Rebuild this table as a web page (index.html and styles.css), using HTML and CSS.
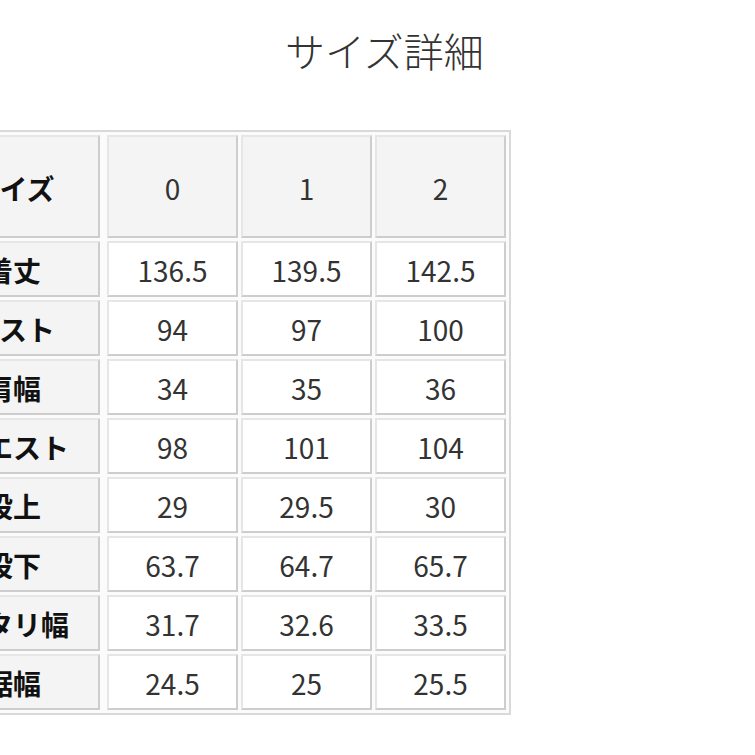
FILE: index.html
```html
<!DOCTYPE html>
<html lang="ja">
<head>
<meta charset="utf-8">
<title>サイズ詳細</title>
<link rel="stylesheet" href="styles.css">
</head>
<body>
<h1 class="title">サイズ詳細</h1>
<div class="size-table">
  <div class="cell head label">サイズ</div>
  <div class="cell head">0</div>
  <div class="cell head">1</div>
  <div class="cell head">2</div>

  <div class="cell label">着丈</div>
  <div class="cell">136.5</div>
  <div class="cell">139.5</div>
  <div class="cell">142.5</div>

  <div class="cell label">バスト</div>
  <div class="cell">94</div>
  <div class="cell">97</div>
  <div class="cell">100</div>

  <div class="cell label">肩幅</div>
  <div class="cell">34</div>
  <div class="cell">35</div>
  <div class="cell">36</div>

  <div class="cell label">ウエスト</div>
  <div class="cell">98</div>
  <div class="cell">101</div>
  <div class="cell">104</div>

  <div class="cell label">股上</div>
  <div class="cell">29</div>
  <div class="cell">29.5</div>
  <div class="cell">30</div>

  <div class="cell label">股下</div>
  <div class="cell">63.7</div>
  <div class="cell">64.7</div>
  <div class="cell">65.7</div>

  <div class="cell label">ワタリ幅</div>
  <div class="cell">31.7</div>
  <div class="cell">32.6</div>
  <div class="cell">33.5</div>

  <div class="cell label">裾幅</div>
  <div class="cell">24.5</div>
  <div class="cell">25</div>
  <div class="cell">25.5</div>
</div>
</body>
</html>
```

FILE: styles.css
```css
html, body {
  margin: 0;
  padding: 0;
  background: #ffffff;
}

body {
  font-family: "Noto Sans CJK JP", "Noto Sans", sans-serif;
  color: #333333;
  overflow: hidden;
}

.title {
  margin: 21px 0 0 0;
  padding-left: 285px;
  font-size: 40px;
  font-weight: 300;
  line-height: 58px;
  color: #333333;
}

.size-table {
  display: inline-grid;
  grid-template-columns: 178px 131px 131px 131px;
  grid-template-rows: 103px repeat(8, 56px);
  gap: 3px;
  margin: 51px 0 0 -79px;
  padding: 3px;
  border: 2px solid #d9d9d9;
  background: #fbfbfb;
}

.cell {
  display: flex;
  align-items: center;
  justify-content: center;
  box-sizing: border-box;
  padding-top: 2px;
  border: 2px solid;
  border-color: #e6e6e6 #cdcdcd #cdcdcd #e6e6e6;
  background: #ffffff;
  font-size: 28px;
  font-weight: 400;
  color: #333333;
}

.head {
  background: #f4f4f4;
}

.label {
  margin-right: 4px;
  background: #f4f4f4;
  font-weight: 700;
  color: #111111;
}
```
